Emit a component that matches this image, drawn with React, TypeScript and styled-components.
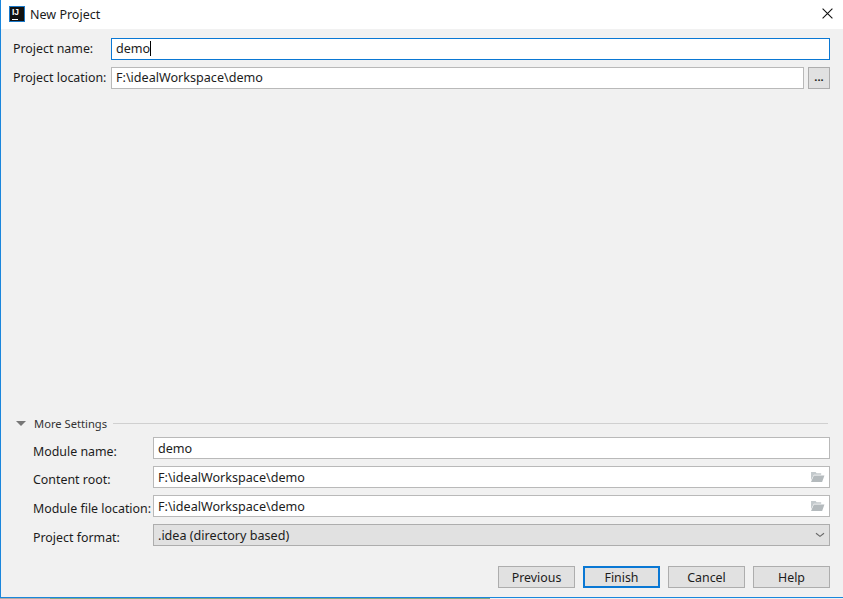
import React from "react";
import styled, { createGlobalStyle } from "styled-components";

const Global = createGlobalStyle`
  html, body { margin: 0; padding: 0; background: #f1f1f1; }
  * { box-sizing: border-box; }
`;

const Dialog = styled.div`
  width: 843px;
  height: 599px;
  display: flex;
  flex-direction: column;
  overflow: hidden;
  background: #f1f1f1;
  font-family: "Noto Sans", "Open Sans", sans-serif;
  font-size: 12.4px;
  color: #1c1c1c;
`;

const Window = styled.div`
  flex: 1;
  min-height: 0;
  display: flex;
  flex-direction: column;
  border-left: 1px solid #1a86dc;
`;

const TitleBar = styled.div`
  height: 29px;
  flex: none;
  background: #fff;
  display: flex;
  align-items: center;
  padding: 0 10px 1px 8px;
  gap: 5px;
`;

const TitleText = styled.span`
  flex: 1;
  font-size: 12.5px;
`;

const CloseSlot = styled.span`
  display: flex;
  margin-bottom: 2px;
`;

const Logo = styled.div`
  width: 16px;
  height: 16px;
  background: #111;
  border: 1px solid #1a78c8;
  color: #fff;
  font-size: 8.5px;
  font-weight: 700;
  line-height: 10px;
  padding-left: 2px;
  position: relative;
  font-family: "Liberation Sans", sans-serif;
  &::after {
    content: "";
    position: absolute;
    left: 2px;
    bottom: 1px;
    width: 6px;
    height: 1px;
    background: #fff;
  }
`;

const Body = styled.div`
  flex: 1;
  display: flex;
  flex-direction: column;
  padding: 9px 13px 9px 12px;
  min-height: 0;
`;

const Row = styled.div<{ $mb: number }>`
  display: flex;
  align-items: center;
  height: 22px;
  margin-bottom: ${(p) => p.$mb}px;
`;

const Label = styled.label<{ $w: number; $indent?: number; $shift: number }>`
  width: ${(p) => p.$w}px;
  flex: none;
  margin-left: ${(p) => p.$indent ?? 0}px;
  white-space: nowrap;
  line-height: 22px;
  position: relative;
  top: ${(p) => p.$shift}px;
`;

const Field = styled.div<{ $focus?: boolean }>`
  flex: 1;
  height: 22px;
  background: #fff;
  border: ${(p) => (p.$focus ? "1px solid #0a78d4" : "1px solid #b9b9b9")};
  display: flex;
  align-items: center;
  padding: 0 4px;
  min-width: 0;
  white-space: nowrap;
`;

const FieldText = styled.span<{ $raise?: boolean }>`
  flex: 1;
  font-size: 12.6px;
  position: relative;
  top: ${(p) => (p.$raise ? -1 : 0)}px;
`;

const Caret = styled.span`
  display: inline-block;
  width: 1px;
  height: 15px;
  background: #000;
  vertical-align: -3px;
`;

const Browse = styled.button`
  width: 22px;
  height: 22px;
  flex: none;
  margin-left: 4px;
  background: #e1e1e1;
  border: 1px solid #adadad;
  padding: 0 0 3px;
  font: 700 11px "Noto Sans", sans-serif;
  color: #222;
`;

const Spacer = styled.div`
  flex: 1;
`;

const SectionHead = styled.div`
  display: flex;
  align-items: center;
  height: 14px;
  margin: 0 2px 7px 3px;
  gap: 8px;
`;

const Triangle = styled.span`
  width: 0;
  height: 0;
  border-left: 5px solid transparent;
  border-right: 5px solid transparent;
  border-top: 5px solid #777;
`;

const SectionTitle = styled.span`
  font-size: 11.2px;
  color: #333;
`;

const Rule = styled.div`
  flex: 1;
  height: 1px;
  background: #d0d0d0;
  margin-left: -2px;
`;

const Select = styled(Field)`
  background: #e1e1e1;
  border-color: #adadad;
`;

const Footer = styled.div`
  display: flex;
  justify-content: flex-end;
  gap: 8px;
  margin-top: 20px;
`;

const FootButton = styled.button<{ $primary?: boolean }>`
  width: 77px;
  height: 22px;
  background: #e1e1e1;
  border: ${(p) => (p.$primary ? "2px solid #0a78d4" : "1px solid #adadad")};
  padding: 0;
  font: 12.4px "Noto Sans", sans-serif;
  color: #1c1c1c;
`;

const BottomEdge = styled.div`
  height: 2px;
  flex: none;
  border-top: 1px solid #1a86dc;
  background: linear-gradient(
    to right,
    #b3aca6 0,
    #b3aca6 50px,
    #7fa883 50px,
    #7fa883 490px,
    #f0f0f0 490px
  );
`;

const Folder = styled.svg`
  margin-right: 0;
  flex: none;
`;

const FolderIcon = () => (
  <Folder width="15" height="12" viewBox="0 0 16 13">
    <path d="M1 1h5l1 1.5h5V4H4L1 10z" fill="#c3c9cc" />
    <path d="M4 5h11.5L13 12H1z" fill="#b4babd" />
  </Folder>
);

const ChevronSvg = styled.svg`
  margin-right: 0;
  flex: none;
`;

const Chevron = () => (
  <ChevronSvg width="10" height="6" viewBox="0 0 10 6">
    <path d="M1 1.2 5 4.4 9 1.2" fill="none" stroke="#666" strokeWidth="1.1" />
  </ChevronSvg>
);

const CloseIcon = () => (
  <svg width="11" height="11" viewBox="0 0 11 11">
    <path d="M.6.6l9.8 9.8M10.4.6.6 10.4" stroke="#111" strokeWidth="1.1" fill="none" />
  </svg>
);

export default function App() {
  return (
    <>
      <Global />
      <Dialog>
        <Window>
          <TitleBar>
            <Logo>IJ</Logo>
            <TitleText>New Project</TitleText>
            <CloseSlot>
              <CloseIcon />
            </CloseSlot>
          </TitleBar>
          <Body>
            <Row $mb={7}>
              <Label $w={98} $shift={0}>Project name:</Label>
              <Field $focus>
                <FieldText $raise>demo<Caret /></FieldText>
              </Field>
            </Row>
            <Row $mb={0}>
              <Label $w={98} $shift={0}>Project location:</Label>
              <Field>
                <FieldText $raise>F:\idealWorkspace\demo</FieldText>
              </Field>
              <Browse>...</Browse>
            </Row>
            <Spacer />
            <SectionHead>
              <Triangle />
              <SectionTitle>More Settings</SectionTitle>
              <Rule />
            </SectionHead>
            <Row $mb={7}>
              <Label $w={120} $indent={20} $shift={4}>Module name:</Label>
              <Field>
                <FieldText>demo</FieldText>
              </Field>
            </Row>
            <Row $mb={7}>
              <Label $w={120} $indent={20} $shift={3}>Content root:</Label>
              <Field>
                <FieldText>F:\idealWorkspace\demo</FieldText>
                <FolderIcon />
              </Field>
            </Row>
            <Row $mb={7}>
              <Label $w={120} $indent={20} $shift={3}>Module file location:</Label>
              <Field>
                <FieldText>F:\idealWorkspace\demo</FieldText>
                <FolderIcon />
              </Field>
            </Row>
            <Row $mb={0}>
              <Label $w={120} $indent={20} $shift={3}>Project format:</Label>
              <Select>
                <FieldText>.idea (directory based)</FieldText>
                <Chevron />
              </Select>
            </Row>
            <Footer>
              <FootButton>Previous</FootButton>
              <FootButton $primary>Finish</FootButton>
              <FootButton>Cancel</FootButton>
              <FootButton>Help</FootButton>
            </Footer>
          </Body>
        </Window>
        <BottomEdge />
      </Dialog>
    </>
  );
}
